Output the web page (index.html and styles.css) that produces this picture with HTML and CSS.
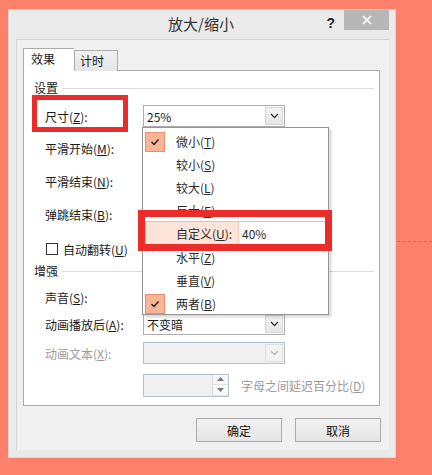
FILE: index.html
```html
<!DOCTYPE html>
<html lang="zh-CN">
<head>
    <meta charset="UTF-8">
    <title>放大/缩小</title>
    <link rel="stylesheet" href="styles.css">
</head>
<body>
    <div class="window">
        <div class="titlebar">
            <span class="title">放大/缩小</span>
            <span class="help">?</span>
            <span class="close">
                <svg width="10" height="10" viewBox="0 0 10 10"><path d="M1 1L9 9M9 1L1 9" stroke="#fff" stroke-width="1.6"/></svg>
            </span>
        </div>
        <div class="client">
            <div class="tabs">
                <div class="tab active">效果</div>
                <div class="tab">计时</div>
            </div>
            <div class="panel">
                <div class="group">设置</div>
                <div class="row gap-9">
                    <span class="label">尺寸(<u>Z</u>):</span>
                    <div class="combo">
                        <span class="value">25%</span>
                        <span class="drop"><svg width="9" height="6" viewBox="0 0 9 6"><path d="M1 1L4.5 4.5L8 1" fill="none" stroke="#333" stroke-width="1.3"/></svg></span>
                    </div>
                </div>
                <div class="row gap-10"><span class="label">平滑开始(<u>M</u>):</span></div>
                <div class="row"><span class="label">平滑结束(<u>N</u>):</span></div>
                <div class="row"><span class="label">弹跳结束(<u>B</u>):</span></div>
                <div class="row gap-13">
                    <span class="checkbox"></span>
                    <span>自动翻转(<u>U</u>)</span>
                </div>
                <div class="group gap-3">增强</div>
                <div class="row gap-7"><span class="label">声音(<u>S</u>):</span></div>
                <div class="row gap-5">
                    <span class="label">动画播放后(<u>A</u>):</span>
                    <div class="combo">
                        <span class="value">不变暗</span>
                        <span class="drop"><svg width="9" height="6" viewBox="0 0 9 6"><path d="M1 1L4.5 4.5L8 1" fill="none" stroke="#333" stroke-width="1.3"/></svg></span>
                    </div>
                </div>
                <div class="row gap-7 disabled">
                    <span class="label">动画文本(<u>X</u>):</span>
                    <div class="combo off">
                        <span class="value"></span>
                        <span class="drop"><svg width="9" height="6" viewBox="0 0 9 6"><path d="M1 1L4.5 4.5L8 1" fill="none" stroke="#b8b8b8" stroke-width="1.3"/></svg></span>
                    </div>
                </div>
                <div class="row gap-10 disabled">
                    <div class="spinner">
                        <span class="field"></span>
                        <span class="arrows">
                            <span class="arrow"><svg width="7" height="4" viewBox="0 0 7 4"><path d="M0 4L3.5 0L7 4Z" fill="#777"/></svg></span>
                            <span class="arrow"><svg width="7" height="4" viewBox="0 0 7 4"><path d="M0 0L3.5 4L7 0Z" fill="#777"/></svg></span>
                        </span>
                    </div>
                    <span class="spin-label">字母之间延迟百分比(<u>D</u>)</span>
                </div>
            </div>
            <div class="buttons">
                <button>确定</button>
                <button>取消</button>
            </div>
        </div>
    </div>

    <!-- open size list -->
    <div class="dropdown">
        <div class="item"><span class="check"><svg width="10" height="8" viewBox="0 0 10 8"><path d="M1.5 4L4 6.5L8.5 1.5" fill="none" stroke="#222" stroke-width="1.5"/></svg></span><span>微小(<u>T</u>)</span></div>
        <div class="item"><span class="check none"></span><span>较小(<u>S</u>)</span></div>
        <div class="item"><span class="check none"></span><span>较大(<u>L</u>)</span></div>
        <div class="item short"><span class="check none"></span><span>巨大(<u>E</u>)</span></div>
        <div class="item custom">
            <span class="check none"></span>
            <span class="custom-label">自定义(<u>U</u>):</span>
            <span class="custom-input">40%</span>
        </div>
        <div class="item"><span class="check none"></span><span>水平(<u>Z</u>)</span></div>
        <div class="item"><span class="check none"></span><span>垂直(<u>V</u>)</span></div>
        <div class="item"><span class="check"><svg width="10" height="8" viewBox="0 0 10 8"><path d="M1.5 4L4 6.5L8.5 1.5" fill="none" stroke="#222" stroke-width="1.5"/></svg></span><span>两者(<u>B</u>)</span></div>
    </div>

    <div class="mark mark-size"></div>
    <div class="mark mark-custom"></div>
    <div class="guide"></div>
</body>
</html>
```

FILE: styles.css
```css
* {
    box-sizing: border-box;
}
body {
    margin: 0;
    width: 432px;
    height: 475px;
    overflow: hidden;
    background-color: #fd806b;
    font-family: "Noto Sans CJK SC", "Noto Sans", sans-serif;
    font-size: 12px;
    color: #1a1a1a;
}
u {
    text-decoration: underline;
    text-underline-offset: 1px;
}
.window {
    margin: 9px 0 0 8px;
    width: 388px;
    height: 449px;
    background-color: #eaeaea;
    border: 1px solid #d6d6d6;
    padding: 0 6px 7px 7px;
    display: flex;
    flex-direction: column;
}
.titlebar {
    height: 29px;
    display: flex;
    align-items: flex-start;
}
.title {
    margin: 4px 0 0 152px;
    font-size: 15px;
    line-height: 20px;
    color: #333;
}
.help {
    margin: 5px 9px 0 auto;
    font-family: "Liberation Sans", sans-serif;
    font-weight: bold;
    font-size: 14px;
    line-height: 16px;
    color: #222;
}
.close {
    width: 45px;
    height: 20px;
    background-color: #b7b7b7;
    display: flex;
    align-items: center;
    justify-content: center;
}
.client {
    flex: 1;
    background-color: #f0f0f0;
    border: 1px solid #d4d4d4;
    border-bottom: none;
    border-right: none;
    padding: 8px 9px 0 6px;
}
.tabs {
    display: flex;
    align-items: flex-end;
    height: 23px;
    margin-bottom: -1px;
    position: relative;
    z-index: 1;
}
.tab {
    height: 21px;
    width: 44px;
    padding-left: 5px;
    line-height: 20px;
    border: 1px solid #acacac;
    border-bottom: none;
    background: linear-gradient(#f0f0f0, #e5e5e5);
}
.tab.active {
    height: 23px;
    width: 51px;
    padding-left: 7px;
    line-height: 20px;
    background: #fff;
    border-right: none;
}
.panel {
    height: 336px;
    background-color: #fff;
    border: 1px solid #acacac;
    padding: 9px 5px 0 10px;
}
.group {
    display: flex;
    align-items: center;
    height: 16px;
    line-height: 16px;
    color: #222;
}
.group::after {
    content: "";
    flex: 1;
    margin-left: 4px;
    border-top: 1px solid #dadada;
}
.row {
    display: flex;
    align-items: center;
    height: 22px;
    margin-top: 11px;
    padding-left: 11px;
}
.gap-3 { margin-top: 3px; }
.gap-5 { margin-top: 5px; }
.gap-7 { margin-top: 7px; }
.gap-9 { margin-top: 9px; }
.gap-10 { margin-top: 10px; }
.gap-13 { margin-top: 13px; }
.label {
    width: 98px;
    flex-shrink: 0;
}
.combo {
    width: 142px;
    height: 22px;
    border: 1px solid #abadb3;
    display: flex;
    align-items: center;
    justify-content: space-between;
    padding: 0 1px 0 3px;
    background-color: #fff;
}
.drop {
    width: 18px;
    height: 18px;
    border: 1px solid #d5d5d5;
    background: linear-gradient(#f4f4f4, #e6e6e6);
    display: flex;
    align-items: center;
    justify-content: center;
}
.disabled {
    color: #9a9a9a;
}
.combo.off {
    background-color: #f0f0f0;
    border-color: #b5c2d2;
}
.combo.off .drop {
    background: #f2f2f2;
    border-color: #e0e0e0;
}
.checkbox {
    width: 12px;
    height: 12px;
    border: 1px solid #333;
    background: #fff;
    margin: 0 5px 0 1px;
}
.spinner {
    margin-left: 98px;
    width: 86px;
    height: 23px;
    border: 1px solid #b5c2d2;
    background-color: #f0f0f0;
    display: flex;
}
.field {
    flex: 1;
}
.arrows {
    width: 16px;
    display: flex;
    flex-direction: column;
    border-left: 1px solid #dadada;
}
.arrow {
    flex: 1;
    display: flex;
    align-items: center;
    justify-content: center;
    background: #f7f7f7;
    border-bottom: 1px solid #e2e2e2;
}
.spin-label {
    margin-left: 12px;
}
.buttons {
    display: flex;
    justify-content: flex-end;
    gap: 13px;
    margin: 12px -1px 0 0;
}
button {
    width: 86px;
    height: 24px;
    font-family: inherit;
    font-size: 12px;
    color: #111;
    border: 1px solid #acacac;
    background: linear-gradient(#f0f0f0, #e5e5e5);
    padding: 0;
}
.dropdown {
    position: absolute;
    left: 142px;
    top: 127px;
    width: 187px;
    height: 188px;
    background-color: #fff;
    border: 1px solid #979797;
    box-shadow: 2px 2px 3px rgba(0, 0, 0, 0.18);
    padding: 2px;
}
.item {
    height: 23px;
    display: flex;
    align-items: center;
    color: #2b2b2b;
}
.item.short {
    height: 22px;
}
.check {
    width: 20px;
    height: 20px;
    margin-right: 11px;
    background-color: #f9b596;
    border: 1px solid #e8906c;
    display: flex;
    align-items: center;
    justify-content: center;
}
.check.none {
    background: none;
    border: none;
}
.item.custom {
    height: 25px;
    background-color: #fce4d8;
    border: 1px solid #f3b99e;
}
.item.custom .check {
    width: 19px;
}
.custom-label {
    width: 62px;
}
.custom-input {
    flex: 1;
    height: 100%;
    background: #fff;
    border-left: 1px solid #f3c8b3;
    padding-left: 3px;
    line-height: 23px;
}
.mark {
    position: absolute;
    border-style: solid;
    border-color: #ec2b2b;
}
.mark-size {
    left: 32px;
    top: 95px;
    width: 96px;
    height: 37px;
    border-width: 5px;
}
.mark-custom {
    left: 138px;
    top: 210px;
    width: 194px;
    height: 41px;
    border-width: 7px;
}
.guide {
    position: absolute;
    left: 397px;
    top: 241px;
    width: 35px;
    border-top: 1px dashed #e0644f;
}
```
